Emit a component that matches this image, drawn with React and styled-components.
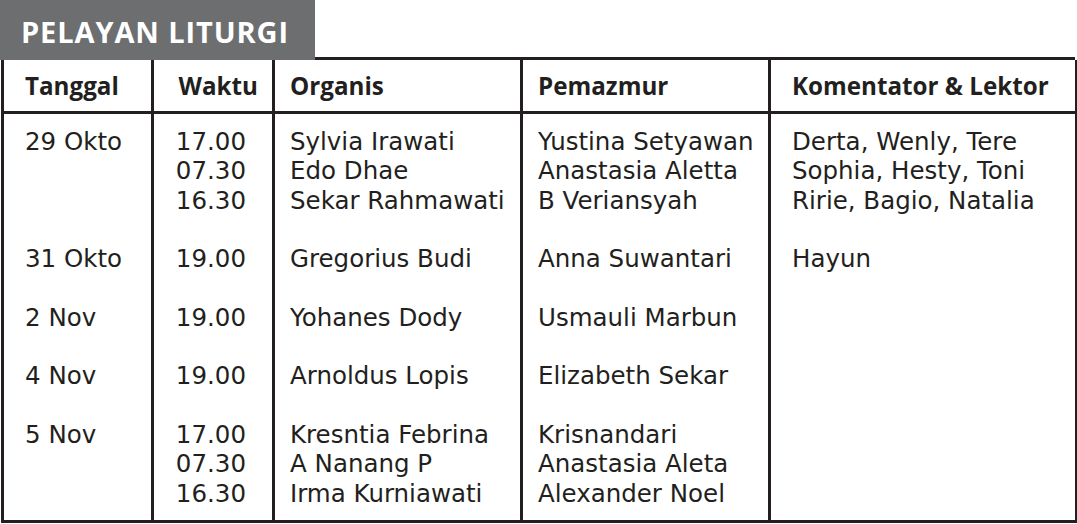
import styled, { createGlobalStyle } from "styled-components";

const GlobalStyle = createGlobalStyle`
  html, body {
    margin: 0;
    padding: 0;
    background: #ffffff;
  }
`;

const Page = styled.div`
  width: 1077px;
  height: 524px;
  background: #ffffff;
  color: #231f20;
`;

const TitleBar = styled.div`
  display: flex;
  align-items: stretch;
  height: 60px;
  padding-right: 2px;
`;

const Tab = styled.div`
  width: 315px;
  background: #6d6e70;
  color: #ffffff;
  font-family: "Open Sans", "DejaVu Sans", sans-serif;
  font-weight: 700;
  font-size: 29px;
  letter-spacing: 0.9px;
  display: flex;
  align-items: center;
  padding-left: 21px;
  padding-top: 2px;
  box-sizing: border-box;
`;

const TabFill = styled.div`
  flex: 1;
  border-bottom: 3px solid #231f20;
`;

const Table = styled.table`
  margin-left: 1px;
  width: 1074px;
  border-collapse: collapse;
  table-layout: fixed;
  border: 3px solid #231f20;
  border-top: none;
`;

const HeadCell = styled.th`
  height: 51px;
  padding: 0 ${(p) => p.$pr || 0}px 0 ${(p) => p.$pl || 0}px;
  text-align: ${(p) => p.$align || "left"};
  font-family: "Open Sans", "DejaVu Sans", sans-serif;
  font-weight: 700;
  font-size: 24.2px;
  color: #231f20;
  border-left: 3px solid #231f20;
  border-bottom: 3px solid #231f20;
  vertical-align: middle;
  white-space: nowrap;
`;

const Cell = styled.td`
  padding: ${(p) => (p.$first ? 13 : 0)}px ${(p) => p.$pr || 0}px
    ${(p) => (p.$last ? 12 : 29.3)}px ${(p) => p.$pl || 0}px;
  text-align: ${(p) => p.$align || "left"};
  font-family: "DejaVu Sans", sans-serif;
  font-size: 24.5px;
  line-height: 29.3px;
  color: #231f20;
  border-left: 3px solid #231f20;
  vertical-align: top;
  white-space: nowrap;
`;

const Line = styled.div``;

const columns = [
  { key: "date", title: "Tanggal", width: 150, pl: 21 },
  { key: "time", title: "Waktu", width: 121, pr: 14, hAlign: "right", align: "right", bodyPr: 26 },
  { key: "organ", title: "Organis", width: 248, pl: 15 },
  { key: "psalm", title: "Pemazmur", width: 248, pl: 15 },
  { key: "lector", title: "Komentator & Lektor", width: 307, pl: 21 },
];

const rows = [
  {
    date: ["29 Okto"],
    time: ["17.00", "07.30", "16.30"],
    organ: ["Sylvia Irawati", "Edo Dhae", "Sekar Rahmawati"],
    psalm: ["Yustina Setyawan", "Anastasia Aletta", "B Veriansyah"],
    lector: ["Derta, Wenly, Tere", "Sophia, Hesty, Toni", "Ririe, Bagio, Natalia"],
  },
  {
    date: ["31 Okto"],
    time: ["19.00"],
    organ: ["Gregorius Budi"],
    psalm: ["Anna Suwantari"],
    lector: ["Hayun"],
  },
  {
    date: ["2 Nov"],
    time: ["19.00"],
    organ: ["Yohanes Dody"],
    psalm: ["Usmauli Marbun"],
    lector: [],
  },
  {
    date: ["4 Nov"],
    time: ["19.00"],
    organ: ["Arnoldus Lopis"],
    psalm: ["Elizabeth Sekar"],
    lector: [],
  },
  {
    date: ["5 Nov"],
    time: ["17.00", "07.30", "16.30"],
    organ: ["Kresntia Febrina", "A Nanang P", "Irma Kurniawati"],
    psalm: ["Krisnandari", "Anastasia Aleta", "Alexander Noel"],
    lector: [],
  },
];

export default function App() {
  return (
    <Page>
      <GlobalStyle />
      <TitleBar>
        <Tab>PELAYAN LITURGI</Tab>
        <TabFill />
      </TitleBar>
      <Table>
        <colgroup>
          {columns.map((c) => (
            <col key={c.key} style={{ width: c.width }} />
          ))}
        </colgroup>
        <thead>
          <tr>
            {columns.map((c) => (
              <HeadCell key={c.key} $pl={c.pl} $pr={c.pr} $align={c.hAlign}>
                {c.title}
              </HeadCell>
            ))}
          </tr>
        </thead>
        <tbody>
          {rows.map((r, i) => (
            <tr key={i}>
              {columns.map((c) => (
                <Cell
                  key={c.key}
                  $pl={c.pl}
                  $pr={c.bodyPr}
                  $align={c.align}
                  $first={i === 0}
                  $last={i === rows.length - 1}
                >
                  {r[c.key].map((t) => (
                    <Line key={t}>{t}</Line>
                  ))}
                </Cell>
              ))}
            </tr>
          ))}
        </tbody>
      </Table>
    </Page>
  );
}
